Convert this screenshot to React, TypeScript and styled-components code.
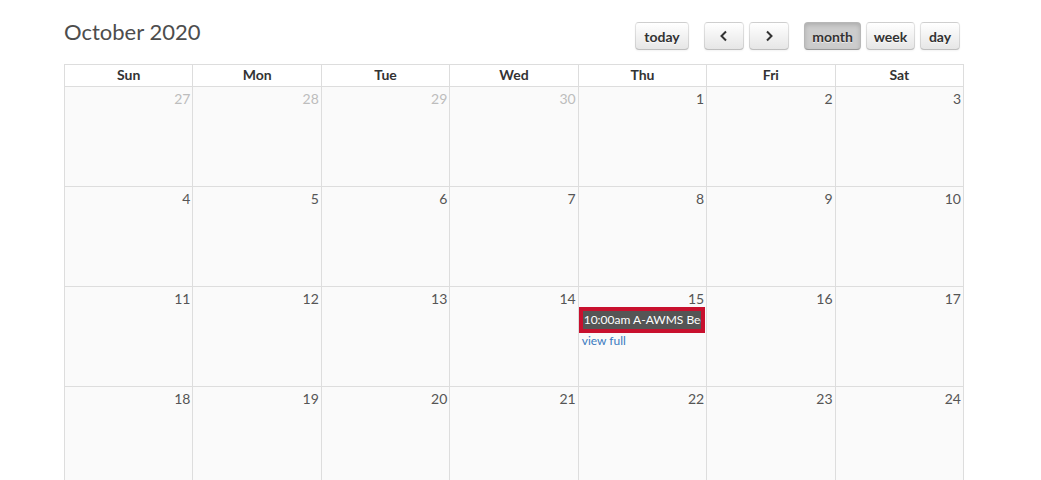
import styled, { createGlobalStyle } from 'styled-components';

const GlobalStyle = createGlobalStyle`
  html, body {
    margin: 0;
    padding: 0;
    background: #fff;
    font-family: Lato, "Open Sans", sans-serif;
    color: #333;
  }
`;

const Page = styled.div`
  padding: 14px 0 0 64px;
  width: 900px;
`;

const Toolbar = styled.div`
  display: flex;
  align-items: flex-start;
  justify-content: space-between;
  margin-bottom: 14px;
  padding-right: 4px;
`;

const Title = styled.h2`
  margin: 4px 0 0;
  font-size: 22px;
  font-weight: 400;
  line-height: 28px;
  color: #4d4d4d;
`;

const Controls = styled.div`
  display: flex;
  align-items: center;
  padding-top: 8px;
`;

const Group = styled.div`
  display: flex;
  gap: 5px;
  margin-left: 15px;
  &:first-child {
    margin-left: 0;
  }
`;

const Button = styled.button<{ $active?: boolean; $w: number }>`
  width: ${({ $w }) => $w}px;
  height: 28px;
  padding: 0;
  border-radius: 4px;
  border: 1px solid;
  border-color: rgba(0, 0, 0, 0.1) rgba(0, 0, 0, 0.1) rgba(0, 0, 0, 0.25);
  font-family: Lato, sans-serif;
  font-size: 14px;
  font-weight: 700;
  color: #333;
  text-shadow: 0 1px 1px rgba(255, 255, 255, 0.75);
  display: flex;
  align-items: center;
  justify-content: center;
  background: ${({ $active }) =>
    $active ? '#cccccc' : 'linear-gradient(#ffffff, #e6e6e6)'};
  box-shadow: ${({ $active }) =>
    $active
      ? 'inset 0 2px 4px rgba(0,0,0,0.15), 0 1px 2px rgba(0,0,0,0.05)'
      : 'inset 0 1px 0 rgba(255,255,255,0.2), 0 1px 2px rgba(0,0,0,0.05)'};
`;

const Grid = styled.div`
  display: grid;
  grid-template-columns: repeat(7, 1fr);
  border-left: 1px solid #ddd;
  border-top: 1px solid #ddd;
`;

const HeadCell = styled.div`
  border-right: 1px solid #ddd;
  border-bottom: 1px solid #ddd;
  height: 21px;
  line-height: 20px;
  text-align: center;
  font-size: 14px;
  font-weight: 700;
  color: #333;
  background: #fff;
`;

const DayCell = styled.div`
  border-right: 1px solid #ddd;
  border-bottom: 1px solid #ddd;
  height: 99px;
  background: #fafafa;
  display: flex;
  flex-direction: column;
  min-width: 0;
`;

const DayNumber = styled.div<{ $other?: boolean }>`
  padding: 3px 2px 0;
  text-align: right;
  font-size: 14px;
  line-height: 17px;
  color: ${({ $other }) => ($other ? '#bdbdbd' : '#555')};
`;

const Event = styled.div`
  margin: 0 1px 0 0;
  border: 4px solid #c8102e;
  background: #555;
  color: #fff;
  font-size: 12px;
  line-height: 18px;
  height: 18px;
  padding: 0 0 0 1px;
  white-space: nowrap;
  overflow: hidden;
`;

const MoreLink = styled.a`
  margin: 1px 0 0 3px;
  font-size: 12px;
  color: #3a7bc0;
  text-decoration: none;
  line-height: 14px;
`;

const Chevron = ({ dir }: { dir: 'left' | 'right' }) => (
  <svg width="10" height="12" viewBox="0 0 10 12">
    <path
      d={dir === 'left' ? 'M7 1.5 L2.5 6 L7 10.5' : 'M3 1.5 L7.5 6 L3 10.5'}
      fill="none"
      stroke="#333"
      strokeWidth="2"
    />
  </svg>
);

const days = ['Sun', 'Mon', 'Tue', 'Wed', 'Thu', 'Fri', 'Sat'];

const cells: { n: number; other?: boolean }[] = [
  { n: 27, other: true },
  { n: 28, other: true },
  { n: 29, other: true },
  { n: 30, other: true },
  ...Array.from({ length: 24 }, (_, i) => ({ n: i + 1 })),
];

export default function App() {
  return (
    <Page>
      <GlobalStyle />
      <Toolbar>
        <Title>October 2020</Title>
        <Controls>
          <Group>
            <Button $w={54}>today</Button>
          </Group>
          <Group>
            <Button $w={40} aria-label="prev">
              <Chevron dir="left" />
            </Button>
            <Button $w={40} aria-label="next">
              <Chevron dir="right" />
            </Button>
          </Group>
          <Group>
            <Button $w={57} $active>
              month
            </Button>
            <Button $w={49}>week</Button>
            <Button $w={40}>day</Button>
          </Group>
        </Controls>
      </Toolbar>
      <Grid>
        {days.map((d) => (
          <HeadCell key={d}>{d}</HeadCell>
        ))}
        {cells.map((c) => (
          <DayCell key={`${c.n}-${c.other ? 'o' : 'c'}`}>
            <DayNumber $other={c.other}>{c.n}</DayNumber>
            {c.n === 15 && !c.other && (
              <>
                <Event>10:00am A-AWMS Bechtel Meeting</Event>
                <MoreLink href="#">view full</MoreLink>
              </>
            )}
          </DayCell>
        ))}
      </Grid>
    </Page>
  );
}
